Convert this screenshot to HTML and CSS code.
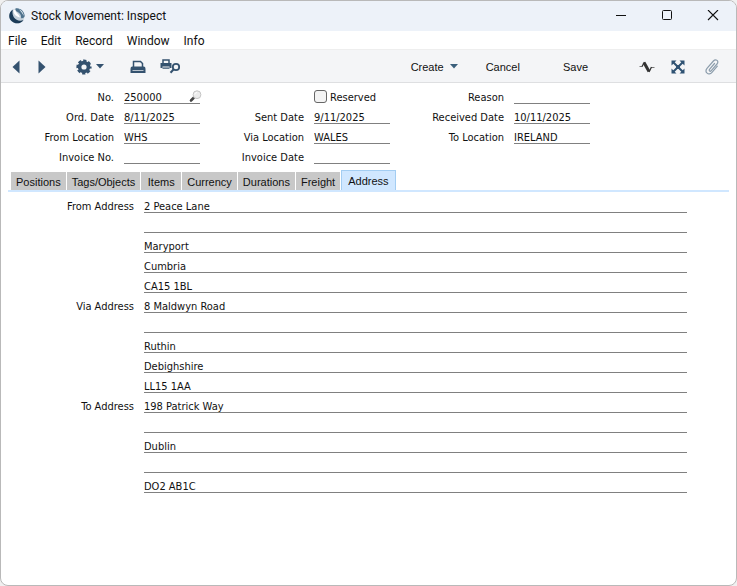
FILE: index.html
```html
<!DOCTYPE html>
<html lang="en">
<head>
    <meta charset="UTF-8">
    <meta name="viewport" content="width=device-width, initial-scale=1.0">
    <title>Stock Movement: Inspect</title>
    <link rel="stylesheet" href="styles.css">
</head>
<body>
    <div class="window">
        <header class="titlebar">
            <svg class="logo" width="16" height="16" viewBox="0 0 16 16">
                <circle cx="8" cy="8" r="7.600" fill="#c3d0da"/>
                <path d="M4 1.500C-0.500 4 -1 10 2.500 13C6 16.500 12 16 14.500 12C11 13.500 7 12.500 5 9.500C3.500 7 3 4 4 1.500Z" fill="#1c3c58"/>
                <path d="M6.500 0.500C11 -0.500 15.500 3.500 15.700 8C15 10 13.500 10.500 12 10C12.500 8 11.500 6 9.500 4.500C7.500 3.500 6 2.500 6.500 0.500Z" fill="#4f738e"/>
                <path d="M4.500 2C4 6 7 8.500 11 9.500C10.500 6.500 7 5 6 1.500Z" fill="#fff"/>
                <path d="M10 1.200C13 2.500 14.500 5 14.800 8C13.500 5.500 12 3.500 10 1.200Z" fill="#e8f0f5"/>
            </svg>
            <h1>Stock Movement: Inspect</h1>
            <div class="window-buttons">
                <button type="button" aria-label="Minimize">
                    <svg width="12" height="12" viewBox="0 0 12 12"><path d="M1 5.500H11" stroke="#111"/></svg>
                </button>
                <button type="button" aria-label="Maximize">
                    <svg width="12" height="12" viewBox="0 0 12 12"><rect x="1.500" y="0.500" width="9" height="9" rx="1" fill="none" stroke="#111"/></svg>
                </button>
                <button type="button" aria-label="Close">
                    <svg width="12" height="12" viewBox="0 0 12 12"><path d="M1 0L11 10M11 0L1 10" stroke="#111" stroke-width="1.100"/></svg>
                </button>
            </div>
        </header>

        <nav class="menubar">
            <a href="#file">File</a>
            <a href="#edit">Edit</a>
            <a href="#record">Record</a>
            <a href="#window">Window</a>
            <a href="#info">Info</a>
        </nav>

        <div class="toolbar">
            <div class="tools">
                <button type="button" aria-label="Previous">
                    <svg width="8" height="14" viewBox="0 0 8 14"><path d="M7.500 0.500V13.500L0.500 7Z" fill="#34526f"/></svg>
                </button>
                <button type="button" aria-label="Next">
                    <svg width="8" height="14" viewBox="0 0 8 14"><path d="M0.500 0.500V13.500L7.500 7Z" fill="#34526f"/></svg>
                </button>
                <button type="button" class="settings" aria-label="Settings">
                    <svg width="16" height="16" viewBox="0 0 16 16">
                        <g fill="none" stroke="#34526f">
                            <circle cx="8" cy="8" r="4.400" stroke-width="3.600"/>
                            <circle cx="8" cy="8" r="6.500" stroke-width="2.200" stroke-dasharray="3.200 1.905" stroke-dashoffset="1.600"/>
                        </g>
                    </svg>
                    <svg width="8" height="5" viewBox="0 0 8 5"><path d="M0 0H8L4 4.500Z" fill="#34526f"/></svg>
                </button>
                <button type="button" class="print" aria-label="Print">
                    <svg width="16" height="14" viewBox="0 0 16 14">
                        <path d="M3.500 7V1.500H10.500L12.500 3.500V7" fill="none" stroke="#34526f" stroke-width="1.500"/>
                        <path d="M0.500 9Q0.500 6.500 2 6.500H14Q15.500 6.500 15.500 9V13H0.500Z" fill="#34526f"/>
                        <path d="M2.500 10.500H13.500" stroke="#f4f5f7" stroke-width="0.700"/>
                    </svg>
                </button>
                <button type="button" class="preview" aria-label="Print preview">
                    <svg width="21" height="15" viewBox="0 0 21 15">
                        <path d="M3 4.500V1H9V4.500" fill="none" stroke="#34526f" stroke-width="1.500"/>
                        <path d="M0.500 4H11.500V9H9.500V7.500H2.500V9H0.500Z" fill="#34526f"/>
                        <path d="M2.500 9.200H9.500" stroke="#34526f" stroke-width="1.300"/>
                        <circle cx="16" cy="8" r="3.200" fill="none" stroke="#34526f" stroke-width="1.800"/>
                        <path d="M13.700 10.300L10.500 13.700" stroke="#34526f" stroke-width="2"/>
                    </svg>
                </button>
            </div>
            <div class="actions">
                <button type="button" class="create">
                    Create
                    <svg width="8" height="5" viewBox="0 0 8 5"><path d="M0 0H8L4 4.500Z" fill="#3a5f7b"/></svg>
                </button>
                <button type="button" class="cancel">Cancel</button>
                <button type="button" class="save">Save</button>
            </div>
            <div class="side-tools">
                <button type="button" aria-label="Activities">
                    <svg width="16" height="14" viewBox="0 0 16 14">
                        <path d="M0.500 6.500H3.500M12 7.500H15.500" stroke="#777"/>
                        <path d="M5 2.500L10 11.500" stroke="#333" stroke-width="3"/>
                        <path d="M3 6.500L5.500 2M10 12L12.500 7" stroke="#333" stroke-width="1.300"/>
                    </svg>
                </button>
                <button type="button" aria-label="Workflow">
                    <svg width="14" height="14" viewBox="0 0 14 14">
                        <path d="M2 2L12 12M12 2L2 12" stroke="#2f5273" stroke-width="2"/>
                        <path d="M0.500 0.500H5.500L0.500 5.500ZM13.500 0.500V5.500L8.500 0.500ZM0.500 13.500V8.500L5.500 13.500ZM13.500 13.500H8.500L13.500 8.500ZM5 5H9V9H5Z" fill="#2f5273"/>
                    </svg>
                </button>
                <button type="button" aria-label="Attachments">
                    <svg width="14" height="16" viewBox="0 0 14 16">
                        <path d="M9.500 4.500L4.700 10.200C3.500 11.700 5.100 13 6.300 11.600L12 5C14.500 2 10.800 -0.700 8.400 2L2.200 9.200C-1 13 3.600 17.200 7 13.300L12.300 7.200" fill="none" stroke="#8c9dac" stroke-width="1.200" stroke-linecap="round"/>
                    </svg>
                </button>
            </div>
        </div>

        <main>
            <form class="header-form">
                <div class="column">
                    <div class="field">
                        <label for="number">No.</label>
                        <div class="lookup">
                            <input type="text" id="number" value="250000">
                            <svg width="13" height="13" viewBox="0 0 13 13">
                                <path d="M5 7.500L2 10.500" stroke="#444" stroke-width="2.600" stroke-linecap="round"/>
                                <circle cx="8" cy="4.700" r="3.900" fill="#ececec" stroke="#c4c4c4"/>
                                <path d="M5.800 4.500Q6 2.600 8 2.500" fill="none" stroke="#fff"/>
                            </svg>
                        </div>
                    </div>
                    <div class="field">
                        <label for="ord-date">Ord. Date</label>
                        <input type="text" id="ord-date" value="8/11/2025">
                    </div>
                    <div class="field">
                        <label for="from-location">From Location</label>
                        <input type="text" id="from-location" value="WHS">
                    </div>
                    <div class="field">
                        <label for="invoice-no">Invoice No.</label>
                        <input type="text" id="invoice-no">
                    </div>
                </div>
                <div class="column">
                    <div class="check">
                        <input type="checkbox" id="reserved">
                        <label for="reserved">Reserved</label>
                    </div>
                    <div class="field">
                        <label for="sent-date">Sent Date</label>
                        <input type="text" id="sent-date" value="9/11/2025">
                    </div>
                    <div class="field">
                        <label for="via-location">Via Location</label>
                        <input type="text" id="via-location" value="WALES">
                    </div>
                    <div class="field">
                        <label for="invoice-date">Invoice Date</label>
                        <input type="text" id="invoice-date">
                    </div>
                </div>
                <div class="column">
                    <div class="field">
                        <label for="reason">Reason</label>
                        <input type="text" id="reason">
                    </div>
                    <div class="field">
                        <label for="received-date">Received Date</label>
                        <input type="text" id="received-date" value="10/11/2025">
                    </div>
                    <div class="field">
                        <label for="to-location">To Location</label>
                        <input type="text" id="to-location" value="IRELAND">
                    </div>
                </div>
            </form>

            <div class="tabs" role="tablist">
                <button type="button" role="tab">Positions</button>
                <button type="button" role="tab">Tags/Objects</button>
                <button type="button" role="tab">Items</button>
                <button type="button" role="tab">Currency</button>
                <button type="button" role="tab">Durations</button>
                <button type="button" role="tab">Freight</button>
                <button type="button" role="tab" class="active" aria-selected="true">Address</button>
            </div>

            <form class="addresses">
                <div class="address">
                    <label for="from-address">From Address</label>
                    <div class="lines">
                        <input type="text" id="from-address" value="2 Peace Lane">
                        <input type="text" aria-label="From Address 2">
                        <input type="text" aria-label="From Address 3" value="Maryport">
                        <input type="text" aria-label="From Address 4" value="Cumbria">
                        <input type="text" aria-label="From Address 5" value="CA15 1BL">
                    </div>
                </div>
                <div class="address">
                    <label for="via-address">Via Address</label>
                    <div class="lines">
                        <input type="text" id="via-address" value="8 Maldwyn Road">
                        <input type="text" aria-label="Via Address 2">
                        <input type="text" aria-label="Via Address 3" value="Ruthin">
                        <input type="text" aria-label="Via Address 4" value="Debighshire">
                        <input type="text" aria-label="Via Address 5" value="LL15 1AA">
                    </div>
                </div>
                <div class="address">
                    <label for="to-address">To Address</label>
                    <div class="lines">
                        <input type="text" id="to-address" value="198 Patrick Way">
                        <input type="text" aria-label="To Address 2">
                        <input type="text" aria-label="To Address 3" value="Dublin">
                        <input type="text" aria-label="To Address 4">
                        <input type="text" aria-label="To Address 5" value="DO2 AB1C">
                    </div>
                </div>
            </form>
        </main>
    </div>
</body>
</html>
```
FILE: styles.css
```css
:root {
    --line: #808080;
    --tab: #c8c8c8;
    --tab-active: #d0e7ff;
    --ui-font: "Liberation Sans", Arial, sans-serif;
    --title-font: Roboto, "Segoe UI", sans-serif;
    --form-font: "DejaVu Sans Condensed", Tahoma, "Noto Sans", sans-serif;
}

* {
    box-sizing: border-box;
    margin: 0;
}

body {
    background: #f0f0f0;
    color: #111;
    font: 11px/22px var(--form-font);
}

button {
    display: flex;
    align-items: center;
    padding: 0;
    border: 0;
    background: none;
    color: inherit;
    font: inherit;
}

svg {
    display: block;
    flex: none;
}

.window {
    min-height: 100vh;
    border: 1px solid #b9b9b9;
    border-radius: 8px;
    background: white;
    overflow: hidden;
}

/* title bar */
.titlebar {
    display: flex;
    align-items: center;
    gap: 6px;
    height: 30px;
    padding: 0 17px 0 8px;
    background: #edf2f9;
}

.titlebar h1 {
    font: 12px/20px var(--title-font);
}

.window-buttons {
    display: flex;
    gap: 34px;
    margin-left: auto;
}

/* menu */
.menubar {
    display: flex;
    gap: 14px;
    height: 18px;
    padding: 0 7px;
    font: 12px/20px var(--title-font);
}

.menubar a {
    color: inherit;
    text-decoration: none;
}

/* toolbar */
.toolbar {
    display: flex;
    align-items: center;
    height: 34px;
    padding: 1px 17px 0 11px;
    border-top: 1px solid #eee;
    border-bottom: 1px solid #dedfe1;
    background: #f4f5f7;
}

.tools,
.actions,
.side-tools {
    display: flex;
    align-items: center;
}

.tools {
    gap: 18px;
}

.settings {
    gap: 4px;
    margin-left: 12px;
}

.print {
    margin-left: 8px;
}

.preview {
    margin-right: 8px;
    margin-left: -4px;
}

.actions {
    flex: 1;
    justify-content: flex-end;
    padding-right: 51px;
    font: 11px/16px var(--ui-font);
}

.create {
    gap: 6px;
}

.cancel {
    margin-left: 28px;
}

.save {
    margin-left: 43px;
}

.side-tools {
    gap: 20px;
}

.side-tools button:first-child {
    margin-right: -4px;
}

/* header fields */
.header-form {
    display: flex;
    gap: 10px;
    padding-top: 4px;
}

.column {
    display: flex;
    flex-direction: column;
    width: 190px;
}

.column:first-child {
    width: 199px;
}

.column:nth-child(2) {
    width: 180px;
}

.field {
    display: flex;
    justify-content: flex-end;
    gap: 10px;
    height: 20px;
}

input[type="text"] {
    display: block;
    width: 76px;
    height: 17px;
    padding: 4px 0 0;
    border: 0;
    border-bottom: 1px solid var(--line);
    border-radius: 0;
    outline: 0;
    background: transparent;
    color: #111;
    font: 11px/12px var(--form-font);
}

.lookup {
    display: flex;
    width: 76px;
    height: 17px;
    border-bottom: 1px solid var(--line);
}

.lookup input[type="text"] {
    flex: 1;
    min-width: 0;
    border-bottom-color: transparent;
}

.lookup svg {
    margin: 3px -2px 0 0;
}

.check {
    display: flex;
    gap: 3px;
    height: 20px;
    padding-left: 104px;
}

.check input {
    width: 13px;
    height: 13px;
    margin-top: 3px;
    border: 1px solid #666;
    border-radius: 3px;
    background: #f3f3f3;
    appearance: none;
}

/* tabs */
.tabs {
    display: flex;
    align-items: flex-end;
    gap: 1px;
    margin: 3px 7px 0;
    padding-left: 3px;
    border-bottom: 2px solid var(--tab-active);
}

.tabs button {
    justify-content: center;
    min-width: 40px;
    height: 18px;
    padding: 2px 5px 0;
    background: var(--tab);
    font: 11px/16px var(--ui-font);
}

.tabs .active {
    height: 20px;
    padding: 0 6px;
    border: 1px solid #a3cdf2;
    border-bottom: 0;
    background: var(--tab-active);
}

/* address lines */
.addresses {
    padding: 4px 49px 0 0;
}

.address {
    display: flex;
    gap: 10px;
}

.address label {
    width: 133px;
    text-align: right;
}

.lines {
    display: flex;
    flex: 1;
    flex-direction: column;
}

.lines input[type="text"] {
    width: 100%;
    margin-bottom: 3px;
}
```
